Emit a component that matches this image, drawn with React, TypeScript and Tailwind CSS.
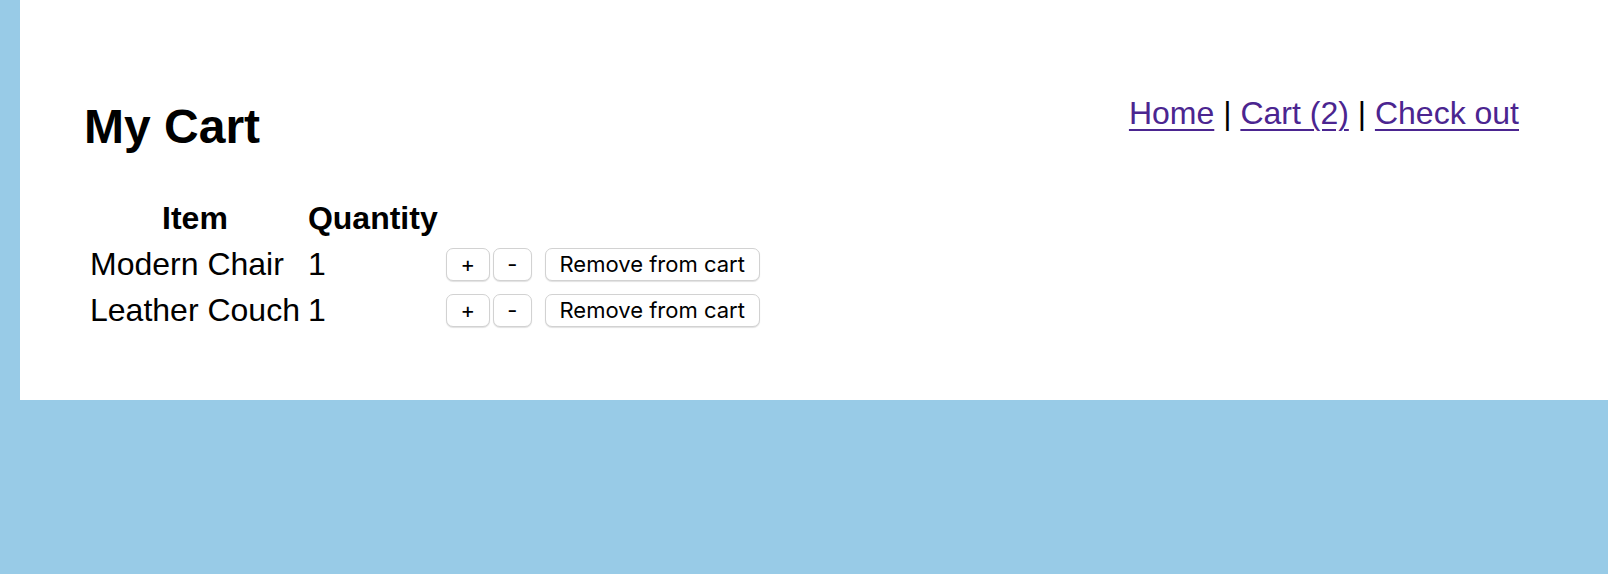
const items = [
  { name: "Modern Chair", qty: 1 },
  { name: "Leather Couch", qty: 1 },
];

function SmallButton({ children, className }: { children: React.ReactNode; className?: string }) {
  return (
    <button
      className={`h-[33px] rounded-[7px] border border-[#d2d2d2] bg-white text-[22px] leading-none text-black shadow-[0_1px_1px_rgba(0,0,0,0.12)] ${className ?? ""}`}
      style={{ fontFamily: "Inter, 'Noto Sans', sans-serif" }}
    >
      {children}
    </button>
  );
}

export default function App() {
  return (
    <div className="min-h-[574px] bg-[#98cbe7]" style={{ fontFamily: "'Liberation Sans', Arial, sans-serif" }}>
      <div className="ml-[20px] h-[400px] bg-white pl-[64px] pr-[89px] pt-[95px]">
        <div className="flex items-start justify-between">
          <h2 className="mt-[8px] text-[48px] font-bold leading-none text-black">My Cart</h2>
          <nav className="mt-[2px] text-[32px] leading-none text-black">
            <a href="#" className="text-[#4b2590] underline underline-offset-[5px] decoration-[2px]">
              Home
            </a>{" "}
            |{" "}
            <a href="#" className="text-[#4b2590] underline underline-offset-[5px] decoration-[2px]">
              Cart (2)
            </a>{" "}
            |{" "}
            <a href="#" className="text-[#4b2590] underline underline-offset-[5px] decoration-[2px]">
              Check out
            </a>
          </nav>
        </div>

        <table className="mt-[42px] border-separate border-spacing-[4px] text-[32px] text-black">
          <thead>
            <tr>
              <th className="p-[2px] text-center font-bold leading-[38px]">Item</th>
              <th className="p-[2px] text-center font-bold leading-[38px]">Quantity</th>
              <th className="p-[2px]"></th>
            </tr>
          </thead>
          <tbody>
            {items.map((item) => (
              <tr key={item.name}>
                <td className="p-[2px] leading-[38px] whitespace-nowrap">{item.name}</td>
                <td className="p-[2px] leading-[38px]">{item.qty}</td>
                <td className="p-[2px]">
                  <div className="flex h-[38px] items-center">
                    <SmallButton className="w-[44px]">+</SmallButton>
                    <SmallButton className="ml-[3px] w-[39px]">-</SmallButton>
                    <SmallButton className="ml-[13px] w-[215px]">Remove from cart</SmallButton>
                  </div>
                </td>
              </tr>
            ))}
          </tbody>
        </table>
      </div>
    </div>
  );
}
